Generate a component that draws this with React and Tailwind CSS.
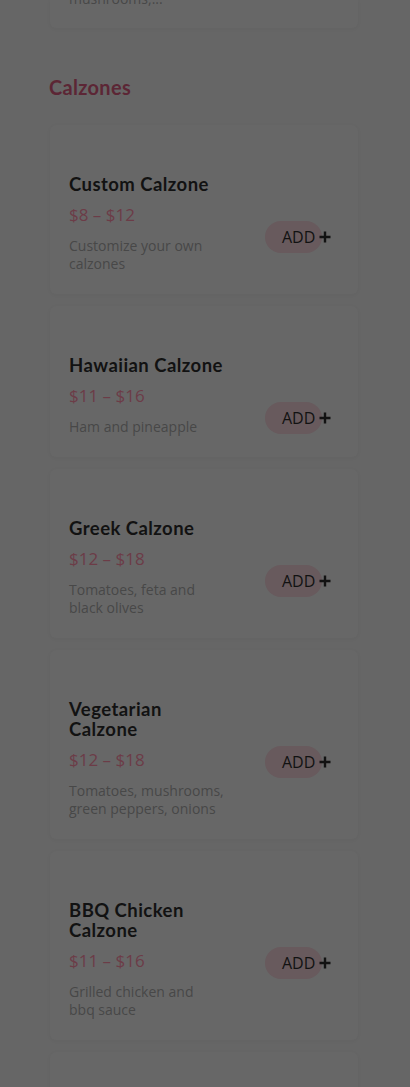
import React from "react";

const items = [
  { name: "Custom Calzone", price: "$8 – $12", desc: ["Customize your own", "calzones"] },
  { name: "Hawaiian Calzone", price: "$11 – $16", desc: ["Ham and pineapple"] },
  { name: "Greek Calzone", price: "$12 – $18", desc: ["Tomatoes, feta and", "black olives"] },
  { name: "Vegetarian Calzone", price: "$12 – $18", desc: ["Tomatoes, mushrooms,", "green peppers, onions"] },
  { name: "BBQ Chicken Calzone", price: "$11 – $16", desc: ["Grilled chicken and", "bbq sauce"] },
];

const heading = { fontFamily: "Lato, 'Liberation Sans', sans-serif" };
const body = { fontFamily: "'Open Sans', 'Liberation Sans', sans-serif" };

function Card({ item }) {
  return (
    <div className="flex w-[308px] rounded-md bg-[#676767] pl-[19px] pt-[49px] pb-[21px] shadow-[0_1px_4px_rgba(0,0,0,0.04)]">
      <div className="flex w-[160px] shrink-0 flex-col">
        <div className="text-[18.5px] font-bold leading-[20px] tracking-[0.45px] text-[#121212]" style={heading}>
          {item.name}
        </div>
        <div className="mt-[9px] text-[17px] leading-[24px] text-[#6c3c47]" style={body}>
          {item.price}
        </div>
        <div className="mt-[10px] flex flex-col text-[14px] leading-[18px] text-[#484848]" style={body}>
          {item.desc.map((l) => (
            <span key={l} className="whitespace-nowrap">{l}</span>
          ))}
        </div>
      </div>
      <div className="ml-[36px] mt-[47px]">
        <div className="flex h-[32px] w-[57px] items-center rounded-full bg-[#685a5d] pl-[17px]">
          <span className="whitespace-nowrap text-[16px] leading-none text-[#121212]" style={body}>
            ADD
          </span>
          <svg width="12" height="12" viewBox="0 0 12 12" className="ml-[4px] shrink-0 overflow-visible">
            <path d="M6 0.5V11.5M0.5 6H11.5" stroke="#121212" strokeWidth="2.4" />
          </svg>
        </div>
      </div>
    </div>
  );
}

export default function App() {
  return (
    <div className="min-h-[1087px] w-[410px] overflow-hidden bg-[#666666]">
      <div className="flex flex-col pl-[50px]">
        <div className="h-[28px] w-[308px] overflow-hidden rounded-b-md bg-[#676767] pl-[19px] shadow-[0_1px_4px_rgba(0,0,0,0.04)]">
          <div className="mt-[-10px] text-[14px] leading-[18px] text-[#484848]" style={body}>
            mushrooms,...
          </div>
        </div>
        <div className="ml-[-1px] mt-[45px] text-[20px] font-bold leading-[28px] tracking-[0.3px] text-[#5c2635]" style={heading}>
          Calzones
        </div>
        <div className="mt-[24px] flex flex-col gap-[12px]">
          {items.map((it) => (
            <Card key={it.name} item={it} />
          ))}
          <div className="h-[60px] w-[308px] rounded-md bg-[#676767] shadow-[0_1px_4px_rgba(0,0,0,0.04)]" />
        </div>
      </div>
    </div>
  );
}
